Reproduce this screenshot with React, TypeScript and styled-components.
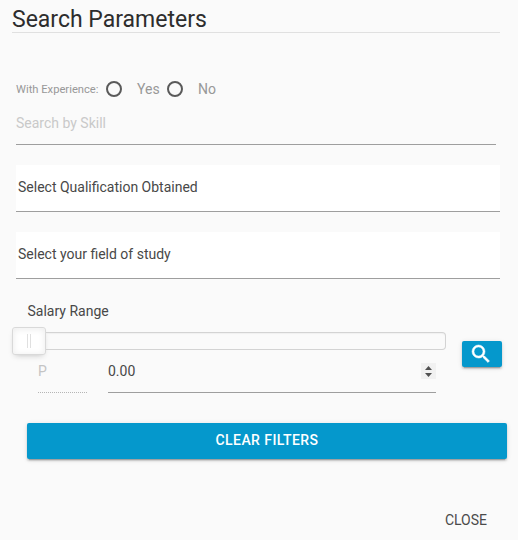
import React from "react";
import styled, { createGlobalStyle } from "styled-components";

const GlobalStyle = createGlobalStyle`
  *, *::before, *::after { box-sizing: border-box; }
  body { margin: 0; background: #fafafa; }
`;

const Modal = styled.main`
  width: 518px;
  height: 540px;
  overflow: hidden;
  display: flex;
  flex-direction: column;
  background: #fafafa;
  color: rgba(0, 0, 0, 0.87);
  font: 400 14px/20px Roboto, sans-serif;
`;

const Header = styled.header`
  height: 33px;
  margin: 0 18px 0 12px;
  padding-top: 7px;
  border-bottom: 1px solid #e0e0e0;
`;

const Title = styled.h5`
  margin: 0;
  color: #2d2d2d;
  font-size: 23px;
  font-weight: 400;
  line-height: 26px;
  white-space: nowrap;
`;

const ExperienceRow = styled.div`
  display: flex;
  align-items: center;
  height: 20px;
  margin: 46px 0 0 16px;
  color: #989898;
`;

const Caption = styled.span`
  width: 90px;
  padding-top: 2px;
  font-size: 11.2px;
`;

const Option = styled.label<{ $width: number }>`
  display: flex;
  align-items: center;
  gap: 15px;
  width: ${(p) => p.$width}px;
`;

const Ring = styled.span`
  flex: none;
  width: 16px;
  height: 16px;
  border: 2px solid #5a5a5a;
  border-radius: 50%;
`;

const SkillField = styled.div`
  height: 46px;
  margin: 0 22px 0 16px;
  padding-top: 14px;
  border-bottom: 1px solid #9e9e9e;
  color: #c9c9c9;
`;

const SelectField = styled.div`
  height: 47px;
  margin: 20px 18px 0 16px;
  padding: 12px 2px 0;
  background: #fff;
  border-bottom: 1px solid #9e9e9e;
  color: #484848;
`;

const SalaryRow = styled.section`
  display: flex;
  align-items: flex-start;
  height: 114px;
  margin: 22px 16px 0 12px;
`;

const SalaryColumn = styled.div`
  width: 434px;
  color: #484848;
`;

const SalaryLabel = styled.div`
  padding-left: 15.5px;
`;

const Slider = styled.div`
  display: flex;
  align-items: center;
  height: 28px;
  margin-top: 6px;
`;

const Handle = styled.div`
  display: flex;
  align-items: center;
  justify-content: center;
  gap: 2px;
  flex: none;
  width: 34px;
  height: 28px;
  border: 1px solid #d9d9d9;
  border-radius: 3px;
  background: #fff;
  box-shadow: inset 0 0 1px #fff, inset 0 1px 7px #ebebeb, 0 3px 6px -3px #bbb;
`;

const Grip = styled.span`
  width: 1px;
  height: 14px;
  background: #e0e0e0;
`;

const Track = styled.div`
  flex: 1;
  height: 18px;
  border: 1px solid #d3d3d3;
  border-left: 0;
  border-radius: 0 4px 4px 0;
  box-shadow: inset 0 1px 1px #f0f0f0;
`;

const AmountRow = styled.div`
  display: flex;
  gap: 21px;
  margin: 6px 10px 0 26px;
`;

const Currency = styled.div`
  width: 49px;
  height: 32px;
  border-bottom: 1px dotted #b5b5b5;
  color: #c4c4c4;
`;

const Amount = styled.div`
  display: flex;
  justify-content: space-between;
  flex: 1;
  height: 32px;
  border-bottom: 1px solid #9e9e9e;
`;

const Spinner = styled.svg`
  margin-top: 2px;
  width: 15px;
  height: 16px;
  background: #f1f1f1;
  fill: #505050;
`;

const Button = styled.button`
  display: flex;
  align-items: center;
  justify-content: center;
  padding: 0;
  border: 0;
  border-radius: 2px;
  background: #0598cc;
  color: #fff;
  font: 500 14px/20px Roboto, sans-serif;
  letter-spacing: 0.42px;
  box-shadow: 0 2px 2px rgba(0, 0, 0, 0.14), 0 1px 5px rgba(0, 0, 0, 0.12),
    0 3px 1px -2px rgba(0, 0, 0, 0.2);
`;

const SearchButton = styled(Button)`
  width: 40px;
  height: 26px;
  margin: 40px 0 0 16px;
  padding-right: 3px;
`;

const ClearButton = styled(Button)`
  flex: none;
  width: 480px;
  height: 36px;
  margin: 8px 0 0 27px;
  padding-bottom: 2px;
`;

const SearchGlyph = styled.svg`
  width: 24px;
  height: 24px;
  fill: #fff;
  stroke: #fff;
  stroke-width: 0.5;
`;

const Footer = styled.footer`
  display: flex;
  justify-content: flex-end;
  margin: 51px 31px 0 0;
`;

const CloseButton = styled.button`
  padding: 0;
  border: 0;
  background: none;
  color: #4a4a4a;
  font: 400 14px/20px Roboto, sans-serif;
`;

export default function App() {
  return (
    <Modal>
      <GlobalStyle />
      <Header>
        <Title>Search Parameters</Title>
      </Header>
      <ExperienceRow>
        <Caption>With Experience:</Caption>
        <Option $width={61}>
          <Ring />
          Yes
        </Option>
        <Option $width={60}>
          <Ring />
          No
        </Option>
      </ExperienceRow>
      <SkillField>Search by Skill</SkillField>
      <SelectField>Select Qualification Obtained</SelectField>
      <SelectField>Select your field of study</SelectField>
      <SalaryRow>
        <SalaryColumn>
          <SalaryLabel>Salary Range</SalaryLabel>
          <Slider>
            <Handle>
              <Grip />
              <Grip />
            </Handle>
            <Track />
          </Slider>
          <AmountRow>
            <Currency>P</Currency>
            <Amount>
              0.00
              <Spinner viewBox="0 0 15 16">
                <path d="M4 7 7.500 3 11 7ZM4 10h7l-3.500 4Z" />
              </Spinner>
            </Amount>
          </AmountRow>
        </SalaryColumn>
        <SearchButton aria-label="Search">
          <SearchGlyph viewBox="0 0 24 24">
            <path d="M15.500 14h-.79l-.28-.27A6.470 6.470 0 0 0 16 9.500 6.500 6.500 0 1 0 9.500 16c1.610 0 3.090-.59 4.230-1.570l.27.28v.79l5 4.990L20.490 19l-4.990-5zm-6 0C7.010 14 5 11.990 5 9.500S7.010 5 9.500 5 14 7.010 14 9.500 11.990 14 9.500 14z" />
          </SearchGlyph>
        </SearchButton>
      </SalaryRow>
      <ClearButton>CLEAR FILTERS</ClearButton>
      <Footer>
        <CloseButton>CLOSE</CloseButton>
      </Footer>
    </Modal>
  );
}
